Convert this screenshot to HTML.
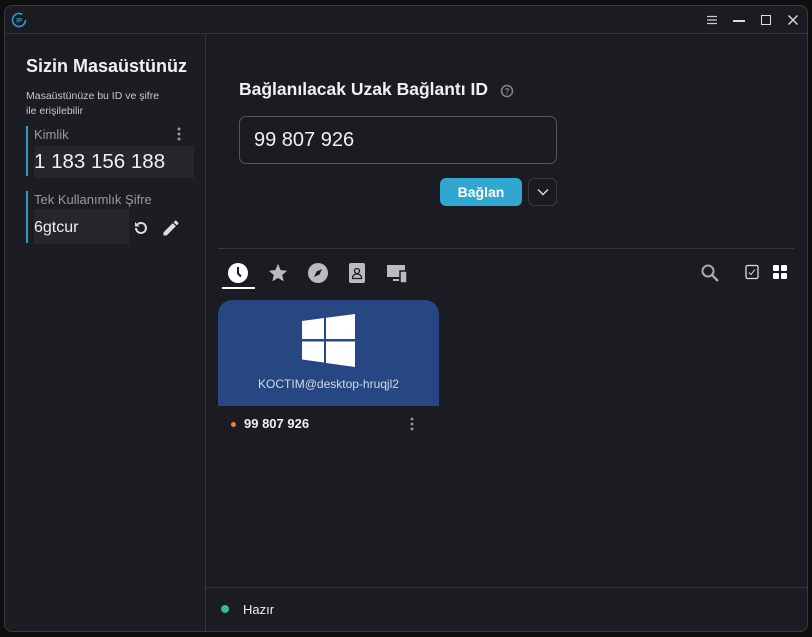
<!DOCTYPE html>
<html><head><meta charset="utf-8"><style>
*{margin:0;padding:0;box-sizing:border-box}
body{width:812px;height:637px;background:#0f0f10;font-family:"Liberation Sans","DejaVu Sans",sans-serif;color:#fff;position:relative;overflow:hidden}
.win{position:absolute;left:4px;top:5px;width:804px;height:627px;background:#1b1c21;border:1px solid #3a3b40;border-radius:8px;overflow:hidden}
.tb{position:absolute;left:0;top:0;right:0;height:28px;border-bottom:1px solid #35363b}
.left{position:absolute;left:0;top:28px;width:201px;bottom:0;border-right:1px solid #35363b;background:#1c1d22}
.abs{position:absolute}
.hr{position:absolute;height:1px;background:#35363b}
</style></head><body>
<div class="win">
<div class="tb">
 <svg class="abs" style="left:6px;top:6px" width="16" height="16" viewBox="0 0 16 16"><circle cx="8" cy="8" r="6.5" fill="none" stroke="#2b9fc7" stroke-width="1.6" stroke-dasharray="34 7"/><text x="5.3" y="10.5" font-size="6" fill="#2b9fc7" font-family="Liberation Sans" font-weight="bold">IP</text></svg>
 <svg class="abs" style="left:701px;top:9px" width="12" height="10"><path d="M1 1.5h10M1 5h10M1 8.5h10" stroke="#ccc" stroke-width="1.2"/></svg>
 <div class="abs" style="left:728px;top:14px;width:12px;height:1.5px;background:#ddd"></div>
 <div class="abs" style="left:756px;top:9px;width:10px;height:10px;border:1.5px solid #ddd"></div>
 <svg class="abs" style="left:782px;top:8px" width="12" height="12"><path d="M1.5 1.5l9 9M10.5 1.5l-9 9" stroke="#ddd" stroke-width="1.4"/></svg>
</div>
<div class="left">
 <div class="abs" style="left:21px;top:22px;font-size:18px;font-weight:bold;color:#f0f0f0;white-space:nowrap">Sizin Masaüstünüz</div>
 <div class="abs" style="left:21px;top:55px;font-size:10.5px;line-height:15px;color:#c8c8c8;width:150px">Masaüstünüze bu ID ve şifre<br>ile erişilebilir</div>
 <div class="abs" style="left:21px;top:92px;width:2px;height:50px;background:#2b9fc7"></div>
 <div class="abs" style="left:29px;top:93px;font-size:13px;color:#9a9a9a">Kimlik</div>
 <svg class="abs" style="left:172px;top:93px" width="4" height="14"><circle cx="2" cy="2" r="1.5" fill="#999"/><circle cx="2" cy="7" r="1.5" fill="#999"/><circle cx="2" cy="12" r="1.5" fill="#999"/></svg>
 <div class="abs" style="left:29px;top:112px;width:160px;height:32px;background:#26272c;font-size:20.5px;line-height:32px;color:#f0f0f0">1 183 156 188</div>
 <div class="abs" style="left:21px;top:157px;width:2px;height:52px;background:#2b9fc7"></div>
 <div class="abs" style="left:29px;top:158px;font-size:13px;color:#9a9a9a">Tek Kullanımlık Şifre</div>
 <div class="abs" style="left:29px;top:175px;width:95px;height:35px;background:#26272c;font-size:16px;line-height:37px;color:#f0f0f0">6gtcur</div>
 <svg class="abs" style="left:127px;top:185px" width="18" height="18" viewBox="0 0 18 18"><path d="M4 9a5 5 0 1 0 1.5-3.6" fill="none" stroke="#ddd" stroke-width="2"/><path d="M3 3v4.5h4.5z" fill="#ddd"/></svg>
 <svg class="abs" style="left:156px;top:184px" width="20" height="20" viewBox="0 0 24 24"><path d="M3 17.25V21h3.75L17.8 9.94l-3.75-3.75L3 17.25zM20.7 7.04a1 1 0 0 0 0-1.41l-2.34-2.34a1 1 0 0 0-1.41 0l-1.83 1.83 3.75 3.75 1.83-1.83z" fill="#ddd"/></svg>
</div>
<div class="abs" style="left:234px;top:73px;font-size:17.5px;font-weight:bold;color:#f0f0f0;white-space:nowrap">Bağlanılacak Uzak Bağlantı ID</div>
<svg class="abs" style="left:495px;top:78px" width="14" height="14" viewBox="0 0 14 14"><circle cx="7" cy="7" r="5.5" fill="none" stroke="#888" stroke-width="1.5"/><text x="4.6" y="10" font-size="8" font-weight="bold" fill="#888" font-family="Liberation Sans">?</text></svg>
<div class="abs" style="left:234px;top:110px;width:318px;height:48px;border:1px solid #55565b;border-radius:7px;font-size:20px;line-height:46px;padding-left:14px;color:#f0f0f0">99 807 926</div>
<div class="abs" style="left:435px;top:172px;width:82px;height:28px;background:#2fa7d0;border-radius:6px;font-size:14px;font-weight:bold;line-height:28px;text-align:center;color:#fff">Bağlan</div>
<div class="abs" style="left:523px;top:172px;width:29px;height:28px;border:1px solid #3a3b40;border-radius:6px"></div>
<svg class="abs" style="left:532px;top:182px" width="12" height="8"><path d="M1 1.5l5 5 5-5" fill="none" stroke="#ddd" stroke-width="1.4"/></svg>
<div class="hr" style="left:213px;top:242px;width:576px"></div>
<svg class="abs" style="left:222px;top:256px" width="22" height="22" viewBox="0 0 22 22"><circle cx="11" cy="11" r="10" fill="#fff"/><path d="M11 5v6.5l3 3" fill="none" stroke="#1b1c21" stroke-width="2"/></svg>
<div class="abs" style="left:217px;top:281px;width:33px;height:2px;background:#fff"></div>
<svg class="abs" style="left:262px;top:256px" width="22" height="22" viewBox="0 0 24 24"><path d="M12 2l2.9 6.9 7.1.6-5.4 4.7 1.6 7L12 17.3 5.8 21.2l1.6-7L2 9.5l7.1-.6z" fill="#bbb"/></svg>
<svg class="abs" style="left:302px;top:256px" width="22" height="22" viewBox="0 0 22 22"><circle cx="11" cy="11" r="10" fill="#bbb"/><path d="M15 7l-2.5 5.5L7 15l2.5-5.5z" fill="#1b1c21"/></svg>
<div class="abs" style="left:344px;top:257px;width:16px;height:20px;background:#bbb;border-radius:2px"></div>
<svg class="abs" style="left:345px;top:259px" width="14" height="16"><circle cx="7" cy="6" r="2.5" fill="none" stroke="#1b1c21" stroke-width="1.3"/><path d="M2.5 13.5c0-3 2-4.5 4.5-4.5s4.5 1.5 4.5 4.5z" fill="none" stroke="#1b1c21" stroke-width="1.3"/></svg>
<svg class="abs" style="left:382px;top:258px" width="22" height="20" viewBox="0 0 22 20"><rect x="0" y="1" width="18" height="12" fill="#bbb"/><rect x="6" y="15" width="6" height="2" fill="#bbb"/><rect x="13" y="7" width="7" height="12" fill="#bbb" stroke="#1b1c21" stroke-width="1.5"/></svg>
<svg class="abs" style="left:695px;top:257px" width="20" height="20" viewBox="0 0 20 20"><circle cx="8" cy="8" r="5.5" fill="none" stroke="#aaa" stroke-width="2"/><path d="M12 12l6 6" stroke="#aaa" stroke-width="2.4"/></svg>
<svg class="abs" style="left:740px;top:258px" width="15" height="16"><rect x="1" y="1.5" width="12" height="13" rx="1.5" fill="none" stroke="#ddd" stroke-width="1.3"/><path d="M4 8.5l2 2 4-5" fill="none" stroke="#ddd" stroke-width="1"/></svg>
<svg class="abs" style="left:768px;top:259px" width="14" height="14"><rect x="0" y="0" width="6" height="6" rx="1.3" fill="#fff"/><rect x="8" y="0" width="6" height="6" rx="1.3" fill="#fff"/><rect x="0" y="8" width="6" height="6" rx="1.3" fill="#fff"/><rect x="8" y="8" width="6" height="6" rx="1.3" fill="#fff"/></svg>
<div class="abs" style="left:213px;top:294px;width:221px;height:106px;background:#274782;border-radius:14px 14px 0 0"></div>
<svg class="abs" style="left:297px;top:308px" width="53" height="53" viewBox="0 0 53 53"><path d="M0 7l22-3v21H0zM24 3.7L53 0v25H24zM0 27.5h22v21L0 45.5zM24 27.5h29V53l-29-4z" fill="#fff"/></svg>
<div class="abs" style="left:213px;top:371px;width:221px;text-align:center;font-size:12px;color:#d0d8e8">KOCTIM@desktop-hruqjl2</div>
<div class="abs" style="left:226px;top:416px;width:5px;height:5px;border-radius:50%;background:#f08030"></div>
<div class="abs" style="left:239px;top:410px;font-size:13px;font-weight:bold;color:#f0f0f0">99 807 926</div>
<svg class="abs" style="left:405px;top:411px" width="4" height="14"><circle cx="2" cy="2" r="1.4" fill="#999"/><circle cx="2" cy="7" r="1.4" fill="#999"/><circle cx="2" cy="12" r="1.4" fill="#999"/></svg>
<div class="hr" style="left:201px;top:581px;right:0"></div>
<div class="abs" style="left:216px;top:599px;width:8px;height:8px;border-radius:50%;background:#2ebaa0"></div>
<div class="abs" style="left:238px;top:596px;font-size:13px;color:#eee">Hazır</div>
</div>
</body></html>
